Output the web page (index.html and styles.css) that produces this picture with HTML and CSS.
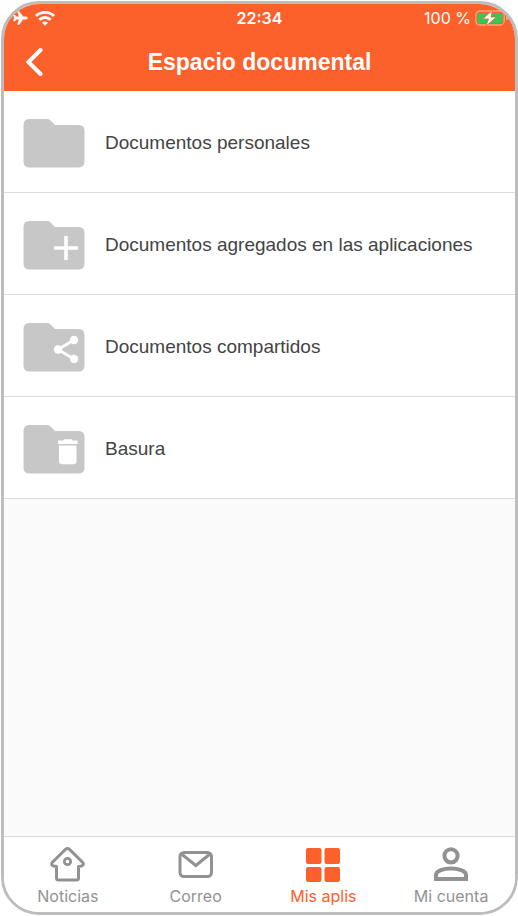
FILE: index.html
```html
<!DOCTYPE html>
<html lang="es">
<head>
<meta charset="utf-8">
<meta name="viewport" content="width=device-width, initial-scale=1">
<title>Espacio documental</title>
<link rel="stylesheet" href="styles.css">
</head>
<body>
<div class="phone">
  <header class="header">
    <div class="status">
      <div class="status-left">
        <svg class="plane" viewBox="0 0 15 14" aria-hidden="true"><path fill="currentColor" stroke="currentColor" stroke-width=".5" d="M14.500 7c0-.8-.8-1.200-1.700-1.200H10L6.200.5H4.600L6.200 5.800H3.400L1.800 4H.5L1.300 7 .5 10h1.300L3.400 8.200h2.800L4.600 13.500h1.600L10 8.200h2.800c.9 0 1.700-.4 1.700-1.200z"/></svg>
        <svg class="wifi" viewBox="0 0 20 15" aria-hidden="true"><g fill="none" stroke="currentColor" stroke-width="2.800"><path d="M1 5a13 13 0 0 1 18 0"/><path d="M4.300 8.800a8.200 8.200 0 0 1 11.400 0"/></g><path fill="currentColor" d="M10 14.700l-3-3a4.200 4.200 0 0 1 6 0z"/></svg>
      </div>
      <span class="time">22:34</span>
      <div class="status-right">
        <span>100 %</span>
        <svg class="battery" viewBox="0 0 34 16" aria-hidden="true"><rect x=".8" y="1" width="28.400" height="14" rx="4" fill="none" stroke="#fca580" stroke-width="1.300"/><rect x="2.500" y="3" width="25" height="10" rx="2" fill="#35c759"/><path d="M31 5.500v5q2-.8 2-2.500t-2-2.500z" fill="#fca580"/><path d="M17.500 0L8 9h5.500l-2.500 7L21.500 7H16z" fill="#fff" stroke="#fc602b" stroke-width=".8"/></svg>
      </div>
    </div>
    <div class="titlebar">
      <button class="back" type="button" aria-label="Volver"><svg viewBox="0 0 18 30" aria-hidden="true"><path d="M15.500 3L3.500 15l12 12" fill="none" stroke="currentColor" stroke-width="4" stroke-linecap="round" stroke-linejoin="miter"/></svg></button>
      <h1>Espacio documental</h1>
    </div>
  </header>
  <main class="content">
    <a class="row" href="#personales">
      <svg class="folder" viewBox="0 0 62 50" aria-hidden="true"><path class="shape" d="M6.500 1H24q2 0 3.300 1.300L32 7h23.500q6 0 6 6v30.500q0 6-6 6h-49q-6 0-6-6V7q0-6 6-6z"/></svg>
      <span>Documentos personales</span>
    </a>
    <a class="row" href="#agregados">
      <svg class="folder" viewBox="0 0 62 50" aria-hidden="true"><path class="shape" d="M6.500 1H24q2 0 3.300 1.300L32 7h23.500q6 0 6 6v30.500q0 6-6 6h-49q-6 0-6-6V7q0-6 6-6z"/><path d="M31 28h24M43 16v24" stroke="#fff" stroke-width="3.600"/></svg>
      <span>Documentos agregados en las aplicaciones</span>
    </a>
    <a class="row" href="#compartidos">
      <svg class="folder" viewBox="0 0 62 50" aria-hidden="true"><path class="shape" d="M6.500 1H24q2 0 3.300 1.300L32 7h23.500q6 0 6 6v30.500q0 6-6 6h-49q-6 0-6-6V7q0-6 6-6z"/><path d="M51 18L35 27.500l16 9.500" fill="none" stroke="#fff" stroke-width="2.800"/><g fill="#fff"><circle cx="51" cy="18" r="4.200"/><circle cx="35" cy="27.500" r="4.200"/><circle cx="51" cy="37" r="4.200"/></g></svg>
      <span>Documentos compartidos</span>
    </a>
    <a class="row" href="#basura">
      <svg class="folder" viewBox="0 0 62 50" aria-hidden="true"><path class="shape" d="M6.500 1H24q2 0 3.300 1.300L32 7h23.500q6 0 6 6v30.500q0 6-6 6h-49q-6 0-6-6V7q0-6 6-6z"/><path fill="#fff" d="M35 16.500h5l1.200-1.300h7.200l1.200 1.300h5V20H35zM36 21.500h17.500V37q0 3.200-3.200 3.200H39.200Q36 40.200 36 37z"/></svg>
      <span>Basura</span>
    </a>
  </main>
  <nav class="tabs">
    <a class="tab" href="#noticias">
      <svg viewBox="0 0 36 36" aria-hidden="true"><g fill="none" stroke="currentColor" stroke-linejoin="round"><path stroke-width="3" d="M15.500 3.400q2-1.800 4 0L32.800 16.500q1 1.600 0 2.800-1 1.200-4.300 1.200V32q0 2-2 2h-18q-2 0-2-2V20.500q-3.300 0-4.300-1.200-1-1.200 0-2.800z"/><circle cx="17.500" cy="15.500" r="3.200" stroke-width="2.700"/></g></svg>
      <span>Noticias</span>
    </a>
    <a class="tab" href="#correo">
      <svg viewBox="0 0 36 36" aria-hidden="true"><g fill="none" stroke="currentColor" stroke-width="3"><rect x="2" y="6.500" width="31.500" height="24" rx="4"/><path d="M3.500 8l14.300 11.500L32 8"/></g></svg>
      <span>Correo</span>
    </a>
    <a class="tab active" href="#aplis" aria-current="page">
      <svg viewBox="0 0 36 36" aria-hidden="true"><g fill="currentColor"><rect x="1" y="2" width="15.500" height="16" rx="2"/><rect x="19.500" y="2" width="15.500" height="16" rx="2"/><rect x="1" y="21" width="15.500" height="15" rx="2"/><rect x="19.500" y="21" width="15.500" height="15" rx="2"/></g></svg>
      <span>Mis aplis</span>
    </a>
    <a class="tab" href="#cuenta">
      <svg viewBox="0 0 36 36" aria-hidden="true"><g fill="none" stroke="currentColor" stroke-width="4"><circle cx="18" cy="9.800" r="6.600"/><path d="M3 33v-4c0-4.500 8-6.500 15-6.500s15 2 15 6.500v4z"/></g></svg>
      <span>Mi cuenta</span>
    </a>
  </nav>
</div>
</body>
</html>
```
FILE: styles.css
```css
* { box-sizing: border-box; }

body {
  margin: 0;
  padding: 1px 0 1px 1px;
  background: #fff;
  font-family: "Liberation Sans", Arial, sans-serif;
}

svg { display: block; flex: none; }
a { color: inherit; text-decoration: none; }

.phone {
  display: flex;
  flex-direction: column;
  min-height: calc(100vh - 2px);
  border: 3px solid #bdbdbd;
  border-radius: 38px;
  overflow: hidden;
  background: #fafafa;
}

.header { background: #fc602b; color: #fff; }

.status {
  display: grid;
  grid-template-columns: 1fr auto 1fr;
  align-items: center;
  height: 28px;
  padding: 0 6px;
  font: 16px/20px Inter, sans-serif;
}

.status-left { display: flex; align-items: center; gap: 7px; padding-left: 3px; }
.status-right { display: flex; align-items: center; justify-content: flex-end; gap: 4px; }
.plane { width: 15px; height: 14px; }
.wifi { width: 20px; height: 15px; }
.battery { width: 34px; height: 16px; }
.time { font-weight: 600; }

.titlebar {
  display: grid;
  grid-template-columns: 60px 1fr 60px;
  align-items: center;
  height: 59px;
}

.back {
  padding: 0 0 0 21px;
  border: 0;
  background: none;
  color: inherit;
}
.back svg { width: 18px; height: 30px; }

h1 {
  margin: 0;
  font-size: 23px;
  line-height: 28px;
  text-align: center;
}

.content { flex: 1; }

.row {
  display: flex;
  align-items: center;
  gap: 20px;
  height: 102px;
  padding: 2px 19px 0;
  border-bottom: 1px solid #dcdcdc;
  background: #fff;
  color: #444;
  font-size: 19px;
  line-height: 24px;
}

.folder { width: 62px; height: 50px; }
.shape { fill: #c7c7c7; }

.tabs {
  display: grid;
  grid-template-columns: repeat(4, 1fr);
  height: 76px;
  border-top: 1px solid #dcdcdc;
  background: #fff;
}

.tab {
  display: flex;
  flex-direction: column;
  align-items: center;
  gap: 4px;
  padding-top: 9px;
  color: #929292;
  font: 16px/20px Inter, sans-serif;
}
.tab svg { width: 36px; height: 36px; }
.active { color: #fc602b; }
```
